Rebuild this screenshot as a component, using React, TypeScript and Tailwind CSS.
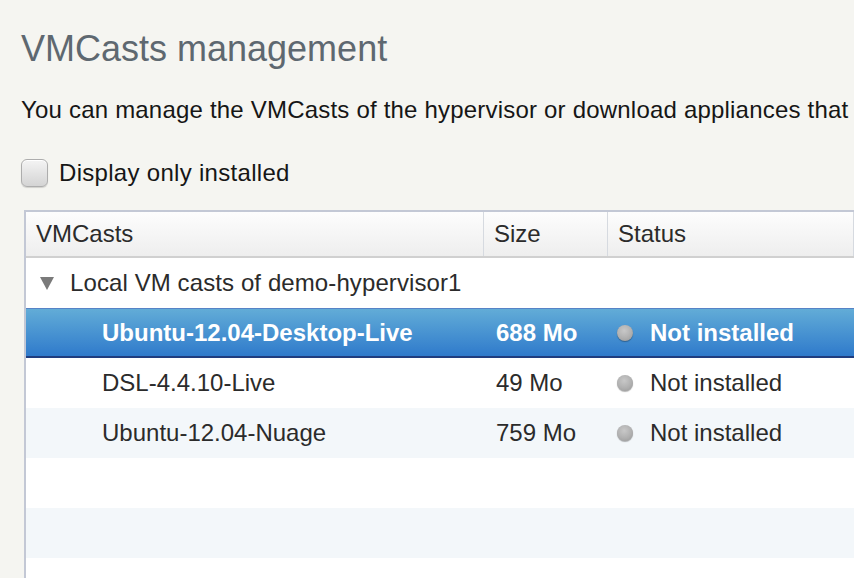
import React from "react";

type Cast = { name: string; size: string; status: string; selected?: boolean };

const casts: Cast[] = [
  { name: "Ubuntu-12.04-Desktop-Live", size: "688 Mo", status: "Not installed", selected: true },
  { name: "DSL-4.4.10-Live", size: "49 Mo", status: "Not installed" },
  { name: "Ubuntu-12.04-Nuage", size: "759 Mo", status: "Not installed" },
];

const cols = "grid grid-cols-[457px_124px_246px_1fr]";

function StatusDot() {
  return (
    <div className="h-[16px] w-[16px] shrink-0 rounded-full bg-[#a4a4a4] bg-[radial-gradient(circle_at_45%_35%,#c8c8c8_0%,#b0b0b0_55%,#969696_100%)] shadow-[0_1px_1px_rgba(0,0,0,0.3)]" />
  );
}

function CastRow({ cast, striped }: { cast: Cast; striped: boolean }) {
  if (cast.selected) {
    return (
      <div
        className={`${cols} h-[50px] border-t border-b-2 border-t-[#5683c6] border-b-[#1f3d7f] bg-gradient-to-b from-[#62acd7] to-[#2f7acb] font-bold text-white`}
      >
        <div className="flex items-center pl-[76px]">{cast.name}</div>
        <div className="flex items-center pl-[13px]">{cast.size}</div>
        <div className="flex items-center gap-[17px] pl-[10px]">
          <StatusDot />
          {cast.status}
        </div>
        <div />
      </div>
    );
  }
  return (
    <div className={`${cols} h-[50px] text-[#2b2b2b] ${striped ? "bg-[#f3f7fa]" : "bg-white"}`}>
      <div className="flex items-center pl-[76px]">{cast.name}</div>
      <div className="flex items-center pl-[13px]">{cast.size}</div>
      <div className="flex items-center gap-[17px] pl-[10px]">
        <StatusDot />
        {cast.status}
      </div>
      <div />
    </div>
  );
}

export default function App() {
  return (
    <div className="h-[578px] w-[854px] overflow-hidden bg-[#f5f5f1] pl-[21px] font-['Liberation_Sans',Arial,sans-serif]">
      <h1 className="mt-[30px] h-[38px] text-[36px] leading-[38px] text-[#5e6870]">VMCasts management</h1>
      <p className="mt-[28px] h-[28px] whitespace-nowrap text-[24px] leading-[28px] tracking-[0.2px] text-[#161616]">
        You can manage the VMCasts of the hypervisor or download appliances that
      </p>

      <label className="mt-[35px] flex h-[28px] items-center gap-[11px] text-[24px] tracking-[0.3px] text-[#161616]">
        <span className="h-[28px] w-[27px] rounded-[6px] border border-[#adadad] bg-gradient-to-b from-[#f4f4f4] to-[#d4d4d4] shadow-[inset_0_1px_0_#fff,0_1px_1px_rgba(0,0,0,0.15)]" />
        Display only installed
      </label>

      <div className="ml-[3px] mt-[23px] w-[860px] border-l-2 border-t-2 border-[#c3c8d5] bg-white text-[24px]">
        <div className={`${cols} h-[46px] border-b-2 border-[#d0d0d0] bg-gradient-to-b from-[#fdfdfd] to-[#eeeeee] text-[#2b2b2b]`}>
          <div className="flex items-center pl-[10px]">VMCasts</div>
          <div className="flex items-center border-l border-[#d6dae0] pl-[10px]">Size</div>
          <div className="flex items-center border-l border-[#d6dae0] pl-[10px]">Status</div>
          <div className="border-l border-[#d6dae0]" />
        </div>

        <div className="flex h-[50px] items-center bg-white pl-[14px] text-[#2b2b2b]">
          <svg width="14" height="13" viewBox="0 0 14 13" className="shrink-0">
            <polygon points="0,0 14,0 7,13" fill="#7a7a7a" />
          </svg>
          <span className="ml-[16px] tracking-[0.1px]">Local VM casts of demo-hypervisor1</span>
        </div>

        {casts.map((c, i) => (
          <CastRow key={c.name} cast={c} striped={i % 2 === 0} />
        ))}

        <div className="h-[50px] bg-white" />
        <div className="h-[50px] bg-[#f3f7fa]" />
        <div className="h-[50px] bg-white" />
      </div>
    </div>
  );
}
